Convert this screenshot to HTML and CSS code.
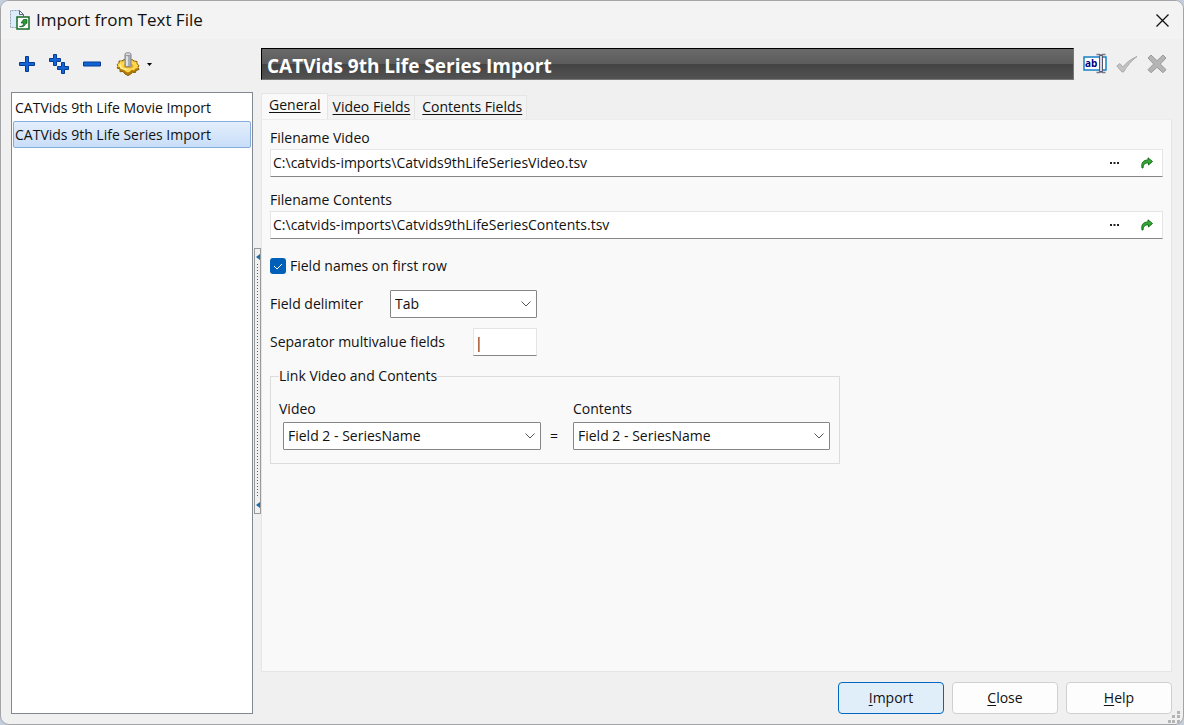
FILE: index.html
```
<!DOCTYPE html>
<html lang="en">

<head>
  <meta charset="utf-8">
  <meta name="viewport" content="width=device-width, initial-scale=1.0">
  <title>Import from Text File</title>
  <link rel="stylesheet" href="styles.css">
</head>

<body>
  <div class="window">
    <header class="titlebar">
      <svg class="app-icon" width="20" height="20" viewBox="0 0 20 20">
        <path d="M.5 .5h9l4 4v13H.5z" fill="#dcecf8" />
        <path d="M9.500 .5H.5v17H6" fill="none" stroke="#8fa3b8" stroke-dasharray="2 1" />
        <path d="M9.500 .5v4h4v2M9.500 .5l4 4" fill="#fff" stroke="#55697d" />
        <rect x="7" y="7" width="12" height="12" fill="#fff" stroke="#176b25" stroke-width="1.500" />
        <path d="M9.500 16.500c3 0 4-1.500 4-3.500h-2.500l2.500-3.500h3.500v4l-1.200-.8c-.3 3-2.500 4.600-6.300 3.800z" fill="#2c9a35" stroke="#0d5a18" stroke-width=".7" />
      </svg>
      <h1>Import from Text File</h1>
      <button class="icon-button close" aria-label="Close window">
        <svg width="13" height="13" viewBox="0 0 13 13"><path d="M.5 .5l12 12M12.500 .5l-12 12" stroke="#111" stroke-width="1.300" /></svg>
      </button>
    </header>

    <div class="content">
      <aside class="sidebar">
        <div class="toolbar">
          <button class="icon-button" aria-label="Add">
            <svg width="16" height="16" viewBox="0 0 16 16"><path d="M6.500 .5h3v6h6v3h-6v6h-3v-6h-6v-3h6z" fill="#1265d4" stroke="#073b93" /></svg>
          </button>
          <button class="icon-button" aria-label="Duplicate">
            <svg width="20" height="20" viewBox="0 0 20 20"><g fill="#1265d4" stroke="#073b93"><path d="M4.500 .5h3v4h4v3h-4v4h-3v-4h-4v-3h4z" /><path d="M12.500 8.500h3v4h4v3h-4v4h-3v-4h-4v-3h4z" /></g></svg>
          </button>
          <button class="icon-button" aria-label="Remove">
            <svg width="18" height="6" viewBox="0 0 18 6"><path d="M.5 1h17v4H.5z" fill="#1265d4" stroke="#073b93" /></svg>
          </button>
          <button class="icon-button options" aria-label="Options">
            <svg width="24" height="24" viewBox="0 0 24 24">
              <path d="M1 12.500l2-1v-2.500h3l2-1.500 3 1h3l2-1 2 1.500 3 .5v2.500l2 1.500-1 2 1 2-3 1-.5 2-3-.2-2 2-2.500 1.200L9 22l-2-2.500-3 .2V17l-3-1 1-1.700z" fill="#b07a08" stroke="#8f6209" />
              <path d="M1.500 12l2-.7.5-2 3 .2 1.500-1.500 3 1h2.500l2-1 1.500 1.500 3 .5v2l2 1.300-1.200 1.500.8 1.200-3 .7-.7 1.600-3-.2-1.600 1.700-2 .8L9 19l-1.600-2-3 .2-.2-2-2.600-.6.7-1.300z" fill="#ffd84c" />
              <path d="M4 12.500c0 5 5 5.500 9 4" fill="none" stroke="#fff2a3" stroke-width="1.300" />
              <ellipse cx="12.500" cy="14" rx="5" ry="2.300" fill="#dda727" />
              <path d="M9 2.500v11c1 1.700 5 1.700 6 0v-11z" fill="#a9adb5" stroke="#81858d" />
              <path d="M10 3v11h2V3z" fill="#dfe2e7" />
              <ellipse cx="12" cy="2.200" rx="3" ry="1.600" fill="#d4d6da" stroke="#92959b" />
            </svg>
            <svg width="5" height="3" viewBox="0 0 5 3"><path d="M0 0h5L2.500 3z" fill="#000" /></svg>
          </button>
        </div>
        <ul class="import-list">
          <li><button>CATVids 9th Life Movie Import</button></li>
          <li><button class="selected">CATVids 9th Life Series Import</button></li>
        </ul>
      </aside>

      <div class="splitter">
        <div class="grip">
          <svg width="4" height="6" viewBox="0 0 4 6"><path d="M4 0v6L0 3z" fill="#1d6ea5" /></svg>
          <span class="dots"></span>
          <svg width="4" height="6" viewBox="0 0 4 6"><path d="M4 0v6L0 3z" fill="#1d6ea5" /></svg>
        </div>
      </div>

      <main class="details">
        <div class="heading">
          <h2>CATVids 9th Life Series Import</h2>
          <button class="icon-button" aria-label="Rename">
            <svg width="24" height="22" viewBox="0 0 24 22">
              <rect x="1" y="4" width="22" height="13" fill="#fff" stroke="#1680c4" stroke-width="1.500" />
              <path d="M13.500 1.500h3l1.500 1 1.500-1h3M13.500 19.500h3l1.500-1 1.500 1h3" fill="none" stroke="#77778c" stroke-width="1.600" />
              <path d="M16.500 2.500h3v16h-3z" fill="#d5d4e4" stroke="#55556c" />
              <text class="rename-text" x="2" y="14">ab</text>
            </svg>
          </button>
          <button class="icon-button" aria-label="Apply">
            <svg width="22" height="18" viewBox="0 0 22 18"><path d="M.8 11l3-2.500 3 3.500C11 7 15 4 21 1.500 15 6 11 11 7.500 17H6z" fill="#c3c3c3" stroke="#aaa" /></svg>
          </button>
          <button class="icon-button" aria-label="Cancel">
            <svg width="20" height="20" viewBox="0 0 20 20"><path d="M1 4L4 1l6 5.700L16 1l3 3-5.700 6 5.700 5.700-3 3L10 13.300l-6 5.400-3-3L6.700 10z" fill="#b5b5b5" stroke="#999" /></svg>
          </button>
        </div>

        <nav class="tabs">
          <a class="active" href="#general">General</a>
          <a href="#video">Video Fields</a>
          <a href="#contents">Contents Fields</a>
        </nav>

        <form class="panel" id="general">
          <label for="file-video">Filename Video</label>
          <div class="file-box">
            <input type="text" id="file-video" value="C:\catvids-imports\Catvids9thLifeSeriesVideo.tsv">
            <button type="button" class="icon-button" aria-label="Browse video file">
              <svg width="9" height="2" viewBox="0 0 9 2"><path d="M0 0h2v2H0zM3.500 0h2v2h-2zM7 0h2v2H7z" fill="#222" /></svg>
            </button>
            <button type="button" class="icon-button" aria-label="Open video file">
              <svg width="12" height="12" viewBox="0 0 12 12"><path d="M1 11C0 6 2 3 7 3V.8L11.500 4.500 7.500 8V6C4 5.700 2.500 7 2 11z" fill="#35a835" stroke="#0d6514" stroke-width=".9" /></svg>
            </button>
          </div>

          <label for="file-contents">Filename Contents</label>
          <div class="file-box">
            <input type="text" id="file-contents" value="C:\catvids-imports\Catvids9thLifeSeriesContents.tsv">
            <button type="button" class="icon-button" aria-label="Browse contents file">
              <svg width="9" height="2" viewBox="0 0 9 2"><path d="M0 0h2v2H0zM3.500 0h2v2h-2zM7 0h2v2H7z" fill="#222" /></svg>
            </button>
            <button type="button" class="icon-button" aria-label="Open contents file">
              <svg width="12" height="12" viewBox="0 0 12 12"><path d="M1 11C0 6 2 3 7 3V.8L11.500 4.500 7.500 8V6C4 5.700 2.500 7 2 11z" fill="#35a835" stroke="#0d6514" stroke-width=".9" /></svg>
            </button>
          </div>

          <div class="row check-row">
            <input type="checkbox" id="first-row" checked>
            <label for="first-row">Field names on first row</label>
          </div>

          <div class="row">
            <label for="delimiter">Field delimiter</label>
            <select id="delimiter">
              <option>Tab</option>
              <option>Comma</option>
            </select>
          </div>

          <div class="row">
            <label for="separator">Separator multivalue fields</label>
            <input class="separator" type="text" id="separator" value="|">
          </div>

          <fieldset>
            <legend>Link Video and Contents</legend>
            <div class="link-fields">
              <label for="link-video">Video</label>
              <label class="second" for="link-contents">Contents</label>
              <select class="first-select" id="link-video">
                <option>Field 2 - SeriesName</option>
              </select>
              <span>=</span>
              <select id="link-contents">
                <option>Field 2 - SeriesName</option>
              </select>
            </div>
          </fieldset>
        </form>

        <footer class="actions">
          <button class="primary"><u>I</u>mport</button>
          <button><u>C</u>lose</button>
          <button><u>H</u>elp</button>
        </footer>
      </main>
    </div>

    <svg class="resize-grip" width="12" height="12" viewBox="0 0 12 12"><path d="M9 0h3v3H9zM4 4h3v3H4zM9 4h3v3H9zM0 9h3v3H0zM4 9h3v3H4zM9 9h3v3H9z" fill="#b4b4b4" /></svg>
  </div>
</body>

</html>
```
FILE: styles.css
```
* {
  box-sizing: border-box;
}

body {
  margin: 0;
  background-color: #c3cddb;
  color: #111;
  font: 14px/20px "Open Sans", "Noto Sans", sans-serif;
}

h1,
h2,
ul {
  margin: 0;
  padding: 0;
}

svg {
  display: block;
  flex: none;
}

button,
input,
select {
  font: inherit;
  color: inherit;
}

.window {
  position: relative;
  display: flex;
  flex-direction: column;
  min-height: 100vh;
  background-color: #f0f0f0;
  border: 1px solid #a2a4a8;
  border-radius: 9px;
  overflow: hidden;
}

.titlebar {
  display: flex;
  align-items: center;
  gap: 6px;
  height: 38px;
  padding: 0 14px 0 9px;
  background-color: #f3f3f3;
}

.titlebar h1 {
  flex: 1;
  font-size: 17px;
  font-weight: normal;
}

.icon-button {
  display: flex;
  align-items: center;
  justify-content: center;
  padding: 0;
  background: none;
  border: 0;
}

.content {
  flex: 1;
  display: grid;
  grid-template-columns: 242px 8px 1fr;
  padding: 9px 11px 10px 10px;
}

/* left side */
.sidebar {
  display: flex;
  flex-direction: column;
}

.toolbar {
  display: flex;
  align-items: center;
  gap: 14px;
  height: 32px;
  padding-left: 8px;
  margin-bottom: 12px;
}

.options {
  gap: 7px;
  margin-left: 1px;
}

.import-list {
  flex: 1;
  padding: 1px;
  background-color: #fff;
  border: 1px solid #828790;
  list-style: none;
}

.import-list button {
  display: block;
  width: 100%;
  height: 27px;
  padding: 0 1px;
  background: none;
  border: 1px solid transparent;
  border-radius: 2px;
  text-align: left;
}

.import-list .selected {
  background: linear-gradient(#e4eefc, #c8def9);
  border-color: #84acdd;
}

.splitter {
  display: flex;
  padding: 200px 0 0 1px;
}

.grip {
  display: flex;
  flex-direction: column;
  align-items: center;
  gap: 4px;
  width: 7px;
  height: 266px;
  padding: 5px 0;
  border: 1px solid #999;
}

.dots {
  flex: 1;
  width: 1px;
  background: repeating-linear-gradient(#1d6ea5 0 1px, transparent 1px 3px);
}

/* right side */
.details {
  display: flex;
  flex-direction: column;
  min-width: 0;
}

.heading {
  display: flex;
  align-items: center;
  gap: 9px;
  padding-right: 5px;
  margin-bottom: 13px;
}

.heading h2 {
  flex: 1;
  height: 32px;
  padding-left: 5px;
  background: linear-gradient(#6a6a6a, #5c5c5c 50%, #434343 50%, #525252);
  border: 1px solid #777;
  border-top-color: #000;
  border-left-color: #000;
  color: #fff;
  font-size: 19px;
  line-height: 34px;
}

.rename-text {
  font: bold 10px "Open Sans", sans-serif;
  fill: #000080;
}

.tabs {
  display: flex;
  align-items: flex-end;
}

.tabs a {
  height: 24px;
  padding: 0 4px 0 5px;
  background-color: #f3f3f3;
  border: 1px solid #e5e5e5;
  border-left: 0;
  border-bottom: 0;
  color: inherit;
  line-height: 22px;
  text-underline-offset: 2px;
}

.tabs a:last-child {
  padding: 0 4px 0 7px;
}

.tabs .active {
  height: 26px;
  padding: 0 6px 0 7px;
  background-color: #f9f9f9;
  border-left: 1px solid #e5e5e5;
}

.panel {
  flex: 1;
  padding: 8px 8px 0;
  background-color: #f9f9f9;
  border: 1px solid #e5e5e5;
  border-top-color: #ececec;
}

.panel > label {
  display: block;
}

.file-box {
  display: flex;
  align-items: center;
  gap: 22px;
  height: 28px;
  padding-right: 9px;
  margin: 1px 0 13px;
  background-color: #fff;
  border: 1px solid #e5e5e5;
  border-bottom-color: #868686;
}

.file-box input {
  flex: 1;
  min-width: 0;
  padding: 0 2px;
  background: none;
  border: 0;
}

.row {
  display: flex;
  align-items: center;
  justify-content: space-between;
  width: 267px;
  height: 28px;
  margin-bottom: 10px;
}

.check-row {
  justify-content: flex-start;
  gap: 4px;
}

input[type="checkbox"] {
  appearance: none;
  width: 16px;
  height: 16px;
  margin: 0;
  background: #005fb8 url("data:image/svg+xml,%3Csvg xmlns='http://www.w3.org/2000/svg' viewBox='0 0 16 16'%3E%3Cpath d='M4 8l3 3 5-5' fill='none' stroke='white'/%3E%3C/svg%3E");
  border-radius: 3px;
}

select {
  appearance: none;
  width: 147px;
  height: 28px;
  padding: 0 24px 0 4px;
  background: #fff url("data:image/svg+xml,%3Csvg xmlns='http://www.w3.org/2000/svg' width='10' height='6'%3E%3Cpath d='M.5 .5l4.500 4.500 4.500-4.500' fill='none' stroke='%23555'/%3E%3C/svg%3E") no-repeat right 5px center;
  border: 1px solid #868686;
  border-radius: 1px;
}

.separator {
  width: 64px;
  height: 28px;
  padding: 0 1px;
  background-color: #fff;
  border: 1px solid #e5e5e5;
  border-bottom-color: #868686;
}

fieldset {
  width: 570px;
  margin: 0;
  padding: 13px 9px 13px 8px;
  border: 1px solid #dcdcdc;
}

legend {
  padding: 0;
}

.link-fields {
  display: grid;
  grid-template-columns: 262px 32px 257px;
  row-gap: 3px;
  align-items: center;
}

.link-fields .second {
  grid-column: 3;
}

.link-fields select {
  width: 100%;
}

.link-fields .first-select {
  width: auto;
  margin-left: 4px;
}

.link-fields span {
  padding-left: 9px;
}

.actions {
  display: flex;
  justify-content: flex-end;
  gap: 8px;
  margin: 10px 0 0;
}

.actions button {
  width: 106px;
  height: 32px;
  background-color: #fdfdfd;
  border: 1px solid #d0d0d0;
  border-radius: 4px;
}

.actions .primary {
  background-color: #e0eef9;
  border-color: #0067c0;
}

u {
  text-underline-offset: 2px;
}

.resize-grip {
  position: absolute;
  right: 3px;
  bottom: 1px;
}
```
